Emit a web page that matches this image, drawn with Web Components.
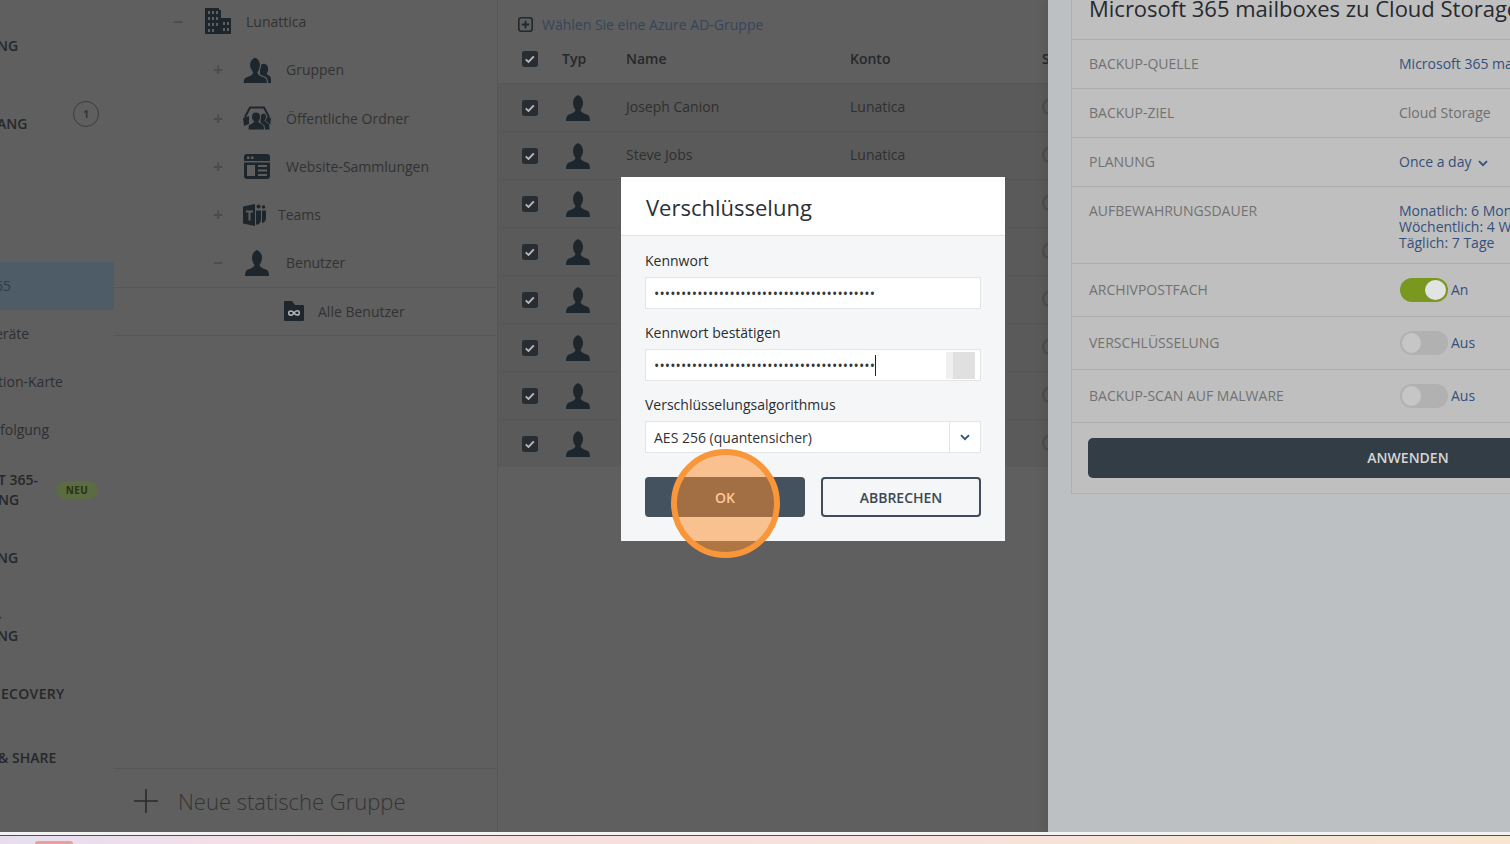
<!DOCTYPE html>
<html lang="de"><head><meta charset="utf-8"><title>Verschlüsselung</title>
<style>
html,body{margin:0;padding:0;height:844px;overflow:hidden;background:#5f5f5f;font-family:"Open Sans","Liberation Sans",sans-serif;font-size:14px}
</style></head><body>
<x-app>
  <x-sidebar>
    <x-nav bold top="0" shift="-3">NG</x-nav>
    <x-nav bold top="20" shift="-3" badge="1" lines="&nbsp;|ANG"></x-nav>
    <x-nav selected top="124" shift="-5">65</x-nav>
    <x-nav shift="-5">eräte</x-nav>
    <x-nav shift="-2">tion-Karte</x-nav>
    <x-nav>folgung</x-nav>
    <x-nav bold top="12" neu shift="-2" lines="T 365-|NG"></x-nav>
    <x-nav bold top="20" shift="-3">NG</x-nav>
    <x-nav bold top="20" shift="-3" lines="-|NG"></x-nav>
    <x-nav bold top="20" shift="1" style="letter-spacing:.3px">ECOVERY</x-nav>
    <x-nav bold top="16" shift="-2">&amp; SHARE</x-nav>
  </x-sidebar>
  <x-tree>
    <x-tree-row level="0" toggle="−" icon="building" w="26">Lunattica</x-tree-row>
    <x-tree-row level="1" toggle="+" icon="group" w="28">Gruppen</x-tree-row>
    <x-tree-row level="1" toggle="+" icon="public" w="28">Öffentliche Ordner</x-tree-row>
    <x-tree-row level="1" toggle="+" icon="site" w="28">Website-Sammlungen</x-tree-row>
    <x-tree-row level="1" toggle="+" icon="teams" w="23" gap="12">Teams</x-tree-row>
    <x-tree-row level="1" toggle="−" icon="person" w="28" line>Benutzer</x-tree-row>
    <x-tree-row level="2" icon="folder" w="20" line>Alle Benutzer</x-tree-row>
  </x-tree>
  <x-table>
    <x-table-row name="Joseph Canion" konto="Lunatica"></x-table-row>
    <x-table-row name="Steve Jobs" konto="Lunatica"></x-table-row>
    <x-table-row></x-table-row><x-table-row></x-table-row><x-table-row></x-table-row>
    <x-table-row></x-table-row><x-table-row></x-table-row><x-table-row></x-table-row>
  </x-table>
  <x-panel>
    <x-prop label="BACKUP-QUELLE" h="49"><a>Microsoft 365 mailboxes</a></x-prop>
    <x-prop label="BACKUP-ZIEL" h="49"><span style="color:#6f6f6f">Cloud Storage</span></x-prop>
    <x-prop label="PLANUNG" h="49"><a>Once a day <svg width="10" height="7" viewBox="0 0 10 7" style="margin-left:3px"><path d="M1 1.2l4 4 4-4" fill="none" stroke="#34507c" stroke-width="1.8"/></svg></a></x-prop>
    <x-prop label="AUFBEWAHRUNGSDAUER" h="77" multi><a>Monatlich: 6 Monate<br>Wöchentlich: 4 Wochen<br>Täglich: 7 Tage</a></x-prop>
    <x-prop label="ARCHIVPOSTFACH" h="53"><x-toggle on>An</x-toggle></x-prop>
    <x-prop label="VERSCHLÜSSELUNG" h="53"><x-toggle>Aus</x-toggle></x-prop>
    <x-prop label="BACKUP-SCAN AUF MALWARE" h="53"><x-toggle>Aus</x-toggle></x-prop>
  </x-panel>
  <x-modal></x-modal>
  <x-highlight></x-highlight>
</x-app>
<script>
const ICONS={
 building:(b)=>`<svg viewBox="0 0 26 26" width="26" height="26"><path fill="currentColor" d="M0 0h14v2h2v8h10v16H0z"/><g fill="${b}"><rect x="3" y="3" width="2" height="3"/><rect x="7" y="3" width="2" height="3"/><rect x="11" y="3" width="2" height="3"/><rect x="3" y="9" width="2" height="3"/><rect x="7" y="9" width="2" height="3"/><rect x="11" y="9" width="2" height="3"/><rect x="3" y="15" width="2" height="3"/><rect x="7" y="15" width="2" height="3"/><rect x="11" y="15" width="2" height="3"/><rect x="3" y="21" width="2" height="3"/><rect x="7" y="21" width="2" height="3"/><rect x="18" y="14" width="2" height="3"/><rect x="22" y="14" width="2" height="3"/><rect x="18" y="20" width="2" height="3"/><rect x="22" y="20" width="2" height="3"/></g></svg>`,
 person:()=>`<svg viewBox="0 0 24 26" width="24" height="26"><path fill="currentColor" d="M12 0C15 1.5 17 4 17 8c0 3-1.500 5.500-2.500 7 .5 2 3.500 3.500 6.500 4.500 2 .7 3 3 3 6.500H0c0-3.500 1-5.800 3-6.500 3-1 6-2.500 6.500-4.500C8.500 13.500 7 11 7 8c0-4 2-6.500 5-8z"/></svg>`,
 group:(b)=>`<svg viewBox="0 0 28 26" width="28" height="26"><path fill="currentColor" d="M22 7c2 .8 3.200 2.500 3.200 5 0 2-.8 3.500-1.500 4.500.3 1.200 1.800 2 2.800 2.600 1 .6 1.500 2 1.500 3.900v3H20c0-3-1-5-3-6.500V9c1-1.500 3-2.500 5-2z"/><path fill="currentColor" stroke="${b}" stroke-width="1.200" d="M12 0c3.500 1.500 5.500 4 5.500 8.500 0 3-1.500 5.500-2.500 7 .5 2 3.500 3.500 6.500 4.500 2 .7 3 3 3 6.500H0c0-3.500 1-5.800 3-6.500 3-1 6-2.500 6.500-4.500C8.500 14 6.500 11.500 6.500 8.500 6.500 4 8.500 1.500 12 0z"/></svg>`,
 public:(b)=>`<svg viewBox="0 0 28 24" width="28" height="24"><path fill="none" stroke="currentColor" stroke-width="2" d="M2 11 7 1.500h14L26 11"/><path fill="currentColor" d="M0 12l6-2v8l-5 2zM28 12l-6-2v8l5 2z"/><g fill="currentColor" stroke="${b}" stroke-width="1"><path d="M20 7c2 0 3.500 1.500 3.500 3.800 0 1.700-.8 3-1.500 3.800.3 1 2 1.700 3.500 2.700 1 .7 1.500 2 1.500 6.700H17V9z"/><path d="M13 6c3 0 4.500 2 4.500 5 0 2-1 3.500-1.800 4.500.3 1.200 2.500 2 4 2.800 1.500.8 1.800 2.700 1.800 5.700H5c0-3 .3-4.900 1.800-5.700 1.500-.8 3.700-1.600 4-2.800C10 14.500 8.500 13 8.500 11c0-3 1.500-5 4.500-5z"/></g></svg>`,
 site:(b)=>`<svg viewBox="0 0 26 25" width="26" height="25"><rect width="26" height="25" rx="3" fill="currentColor"/><g fill="${b}"><rect x="3" y="2.500" width="2.500" height="2.500"/><rect x="7" y="2.500" width="2.500" height="2.500"/><rect y="7" x="0" width="26" height="1.500"/><rect x="3" y="11" width="8" height="11"/><rect x="14" y="11" width="9" height="2"/><rect x="14" y="15.500" width="9" height="2"/><rect x="14" y="20" width="9" height="2"/></g></svg>`,
 teams:(b)=>`<svg viewBox="0 0 23 22" width="23" height="22"><circle cx="15.500" cy="2.500" r="2" fill="currentColor"/><circle cx="20.500" cy="3" r="1.800" fill="currentColor"/><path fill="currentColor" d="M13 6.500h5v8c0 4-1.500 6-5 6zM19 6.500h4v7c0 3.500-1.500 5-4 5.500z"/><path fill="currentColor" d="M0 2.500 12 0v22L0 19.500z"/><path fill="${b}" d="M3 6.500h7v2H7.500v8h-2v-8H3z"/></svg>`,
 folder:(b)=>`<svg viewBox="0 0 20 20" width="20" height="20"><path fill="currentColor" d="M1 0h7l3 4h8a1 1 0 0 1 1 1v14a1 1 0 0 1-1 1H1a1 1 0 0 1-1-1V1a1 1 0 0 1 1-1z"/><path fill="none" stroke="#b5b5b5" stroke-width="1.500" d="M10 12c-1-1.500-2-2-3.200-2a2 2 0 0 0 0 4.200c1.200 0 2.200-.7 3.200-2.200s2-2.200 3.200-2.200a2 2 0 0 1 0 4.200c-1.200 0-2.200-.5-3.200-2z"/></svg>`
};
function def(name,css,render){
  customElements.define(name,class extends HTMLElement{
    connectedCallback(){
      if(this.shadowRoot)return;
      const r=this.attachShadow({mode:'open'});
      r.innerHTML=`<style>${css}</style>`+render(this);
    }
  });
}
def('x-app',`:host{display:block;width:1510px;height:844px;position:relative;overflow:hidden;color:#2e2e2e}
.main{display:grid;grid-template-columns:114px 384px 550px 462px;height:832px;background:#5f5f5f;overflow:hidden}
.foot{height:12px;background:#fff;display:flex;flex-direction:column}
.foot i{display:block;height:3px;background:#f2f2f2;flex:none}
.foot b{display:block;height:1px;background:#55504f;flex:none}
.foot u{display:block;flex:1;position:relative;background:linear-gradient(90deg,#e6def0 0,#f6dfe4 20%,#f8e0dc 60%,#f6e6cf 100%)}
.foot u::after{content:"";position:absolute;left:35px;width:38px;top:5px;bottom:0;background:#ea9e9e;border-radius:3px 3px 0 0}`,
()=>`<div class="main"><slot name="a"></slot></div><div class="foot"><i></i><b></b><u></u></div><slot name="over"></slot>`);
def('x-sidebar',`:host{display:flex;flex-direction:column;padding-top:22px;overflow:hidden;background:#5f5f5f}`,()=>`<slot></slot>`);
def('x-nav',`:host{display:flex;flex:none;align-items:center;height:48px;position:relative;overflow:hidden;color:#2c2f33;line-height:20px;white-space:nowrap}
:host([bold]){font-weight:600;color:#25282b}
:host([selected]){background:#4d5c67;color:#333b42}
.t{flex:1;min-width:0}
.c{position:absolute;left:73px;top:11px;width:24px;height:24px;border:1px solid #3b3b3b;border-radius:50%;display:flex;align-items:center;justify-content:center;font-size:10px;font-weight:700;color:#333}
.n{position:absolute;left:56px;top:15px;width:42px;height:18px;border-radius:9px;background:#5b6b42;display:flex;align-items:center;justify-content:center;font-size:10px;font-weight:700;letter-spacing:.4px;color:#28340e}`,
e=>{e.style.marginTop=(e.getAttribute('top')||0)+'px';
 const l=e.getAttribute('lines');const s=e.getAttribute('shift')||0;
 const body=l?l.split('|').join('<br>'):'<slot></slot>';
 return `<div class="t" style="margin-left:${s}px">${body}</div>`+(e.hasAttribute('badge')?`<span class="c">${e.getAttribute('badge')}</span>`:'')+(e.hasAttribute('neu')?`<span class="n">NEU</span>`:'');});
def('x-tree',`:host{display:flex;flex-direction:column;border-right:1px solid #565656;overflow:hidden;background:#5f5f5f}
.list{flex:1;margin-top:-3px}
.add{height:63px;flex:none;border-top:1px solid #565656;display:flex;align-items:center;gap:20px;padding-left:20px;font-size:22px;font-weight:300;color:#343434}
.add svg{flex:none}`,
()=>`<div class="list"><slot></slot></div><div class="add"><svg width="24" height="24" viewBox="0 0 24 24"><path d="M12 0v24M0 12h24" stroke="#2a2a2a" stroke-width="1.600" fill="none"/></svg>Neue statische Gruppe</div>`);
def('x-tree-row',`:host{display:flex;align-items:center;height:48.45px;box-sizing:border-box;color:#323232;white-space:nowrap}
:host([line]){border-bottom:1px solid #565656}
.tg{width:16px;text-align:center;flex:none;font-size:17px;font-weight:700;color:#4c4c4c;line-height:1}
.ic{display:flex;justify-content:center;color:#1e262d;flex:none}`,
e=>{const lv=+e.getAttribute('level');const pad=[56,96,170][lv];const w=e.getAttribute('w');
 const gap1=lv==0?19:17;const gap2=e.getAttribute('gap')||(lv==2?14:15);
 return `<span style="width:${pad}px;flex:none"></span>`+(e.hasAttribute('toggle')?`<span class="tg" style="margin-right:${gap1}px">${e.getAttribute('toggle')}</span>`:'')+
 `<span class="ic" style="width:${w}px;margin-right:${gap2}px">${ICONS[e.getAttribute('icon')]('#5f5f5f')}</span><slot></slot>`;});
const COLS='grid-template-columns:64px 64px 224px 192px 1fr;';
const CHECK=(m)=>`<svg width="16" height="16" viewBox="0 0 15 15" style="margin:${m}px 0 0 24px;display:block"><rect width="15" height="15" rx="2" fill="#272d33"/><path d="M3.500 7.800l2.600 2.500 5-5.300" stroke="#b9b9b9" stroke-width="1.700" fill="none"/></svg>`;
def('x-table',`:host{display:flex;flex-direction:column;overflow:hidden;position:relative;background:#5f5f5f}
.add{height:34px;flex:none;display:flex;align-items:flex-end;padding-left:20px;gap:9px;color:#36455c;line-height:19px;box-sizing:border-box}
.add svg{margin-bottom:2px}
.head{display:grid;${COLS}align-items:center;height:49px;flex:none;font-weight:600;color:#25282b;white-space:nowrap;overflow:hidden}
.head span{margin-top:-1px}
.rows{background:#5a5a5a}`,
()=>`<div class="add"><svg width="15" height="15" viewBox="0 0 15 15"><rect x=".8" y=".8" width="13.400" height="13.400" rx="2.500" fill="none" stroke="#22282e" stroke-width="1.600"/><path d="M7.500 3.800v7.400M3.800 7.500h7.400" stroke="#22282e" stroke-width="1.800"/></svg>Wählen Sie eine Azure AD-Gruppe</div>
<div class="head">${CHECK(0)}<span>Typ</span><span>Name</span><span>Konto</span><span>S</span></div><div class="rows"><slot></slot></div>`);
def('x-table-row',`:host{display:grid;${COLS}align-items:center;height:48px;box-sizing:border-box;border-top:1px solid #565656;padding-bottom:1px;color:#2f2f2f;white-space:nowrap;overflow:hidden}
.x{margin-top:-2px}
.p{color:#1e262d;margin:2px 0 0 4px;display:block;height:26px}
.st{display:block;width:16px;height:16px;border:2px solid #4c4c4c;border-radius:50%;box-sizing:border-box}`,
e=>`${CHECK(2)}<span class="p">${ICONS.person()}</span><span class="x">${e.getAttribute('name')||''}</span><span class="x">${e.getAttribute('konto')||''}</span><span class="st"></span>`);
def('x-panel',`:host{display:block;background:#bcc0c3;padding-left:23px;box-shadow:-5px 0 8px rgba(0,0,0,.07);overflow:hidden;position:relative}
.card{background:#bfbfbf;border:1px solid #b0b0b0;border-top:0;width:600px;height:494px;box-sizing:border-box}
h1{margin:0;height:40px;box-sizing:border-box;border-bottom:1px solid #adadad;font-size:22px;font-weight:400;color:#262a2e;line-height:16px;padding-left:17px;white-space:nowrap}
.btn{margin:15px 0 0 16px;height:40px;width:640px;background:#333d46;border-radius:5px;color:#d6d6d6;font-weight:600;display:flex;align-items:center;justify-content:center;padding-bottom:1px;box-sizing:border-box}`,
()=>`<div class="card"><h1>Microsoft 365 mailboxes zu Cloud Storage</h1><slot></slot><div class="btn">ANWENDEN</div></div>`);
def('x-prop',`:host{display:grid;grid-template-columns:310px 1fr;box-sizing:border-box;border-bottom:1px solid #adadad;padding-left:17px;align-items:center;white-space:nowrap;color:#727272;overflow:hidden;line-height:16px}
:host([multi]){align-items:start;padding-top:16px}
::slotted(a){color:#34507c}`,
e=>{e.style.height=e.getAttribute('h')+'px';return `<span>${e.getAttribute('label')}</span><div><slot></slot></div>`;});
def('x-toggle',`:host{display:flex;align-items:center;gap:3px;color:#34507c;margin-left:1px}
.s{width:48px;height:24px;border-radius:12px;box-sizing:border-box;background:#b1b1b1;position:relative;flex:none}
.s i{position:absolute;top:2px;left:2px;width:19px;height:20px;border-radius:50%;background:#c6c6c6}
:host([on]) .s{background:#7a981f}
:host([on]) .s i{left:25px;width:21px;background:#e2e4e4}`,
()=>`<span class="s"><i></i></span><slot></slot>`);
def('x-modal',`:host{display:block;position:absolute;left:621px;top:177px;width:384px;height:364px;background:#f4f6f8;color:#26292c}
.h{height:59px;box-sizing:border-box;background:#fff;border-bottom:1px solid #e2e5e8;padding:15px 25px 0;font-size:22px;line-height:30px;color:#2b3036}
.b{padding:15px 24px 0;display:flex;flex-direction:column}
label{display:block;line-height:20px;height:26px;color:#2a2d30}
.f{height:32px;box-sizing:border-box;background:#fff;border:1px solid #e3e6e9;margin-bottom:14px;display:flex;align-items:center;padding-left:8px;position:relative;color:#2f3338;white-space:nowrap}
.d{letter-spacing:.13px;font-size:14px;color:#33383d}
.car{display:inline-block;width:1px;height:21px;background:#222;vertical-align:middle}
.g{position:absolute;right:5px;top:2px;width:29px;height:27px;background:linear-gradient(90deg,#f0f0f0 0 7px,#e0e0e0 7px)}
.sel{margin-bottom:24px}
.ar{position:absolute;right:0;top:0;bottom:0;width:30px;border-left:1px solid #e3e6e9;display:flex;align-items:center;justify-content:center}
.bt{display:flex;gap:16px}
.bt div{width:160px;height:40px;box-sizing:border-box;border-radius:4px;display:flex;align-items:center;justify-content:center;font-weight:600}
.ok{background:#44515e;color:#fff}
.ca{background:#f4f6f8;border:2px solid #3f4c59;color:#3c4853}`,
()=>{const dots='•'.repeat(41);return `<div class="h">Verschlüsselung</div><div class="b">
<label>Kennwort</label><div class="f"><span class="d">${dots}</span></div>
<label>Kennwort bestätigen</label><div class="f"><span class="d">${dots}</span><span class="car"></span><span class="g"></span></div>
<label>Verschlüsselungsalgorithmus</label><div class="f sel">AES 256 (quantensicher)<span class="ar"><svg width="10" height="7" viewBox="0 0 10 7"><path d="M1 1.200l4 4 4-4" fill="none" stroke="#34507c" stroke-width="1.800"/></svg></span></div>
<div class="bt"><div class="ok">OK</div><div class="ca">ABBRECHEN</div></div></div>`;});
def('x-highlight',`:host{display:block;position:absolute;left:671px;top:449px;width:109px;height:109px;box-sizing:border-box;border:6px solid #f9963a;border-radius:50%;background:rgba(255,140,40,.5)}`,()=>'');
const app=document.querySelector('x-app');
for(const c of app.children){c.slot=(c.tagName==='X-MODAL'||c.tagName==='X-HIGHLIGHT')?'over':'a';}
</script>
</body></html>
